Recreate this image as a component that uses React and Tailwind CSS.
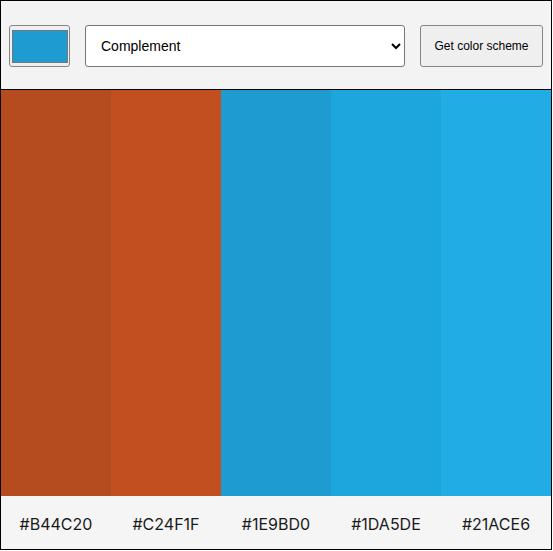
import { useState } from 'react';

const COLORS = ['#B44C20', '#C24F1F', '#1E9BD0', '#1DA5DE', '#21ACE6'];

const MODES = ['Monochrome', 'Monochrome-dark', 'Monochrome-light', 'Analogic', 'Complement', 'Analogic-complement', 'Triad', 'Quad'];

export default function App() {
  const [seed, setSeed] = useState('#1e9bd0');
  const [mode, setMode] = useState('Complement');

  return (
    <div className="w-[552px] h-[550px] border border-black flex flex-col font-['Liberation_Sans',Arial,sans-serif]">
      <header className="h-[89px] shrink-0 bg-[#f3f3f3] border-b border-black flex items-center pt-[2px] pl-2 pr-2">
        <label className="w-[61px] h-[42px] rounded-[3px] border border-[#858585] bg-[#efefef] flex items-center justify-center">
          <span className="w-[56px] h-[33px] border border-[#777] bg-[#1e9bd0]" style={{ backgroundColor: seed }} />
          <input type="color" className="hidden" value={seed} onChange={(e) => setSeed(e.target.value)} />
        </label>
        <select
          className="flex-1 ml-[15px] h-[42px] rounded-[3px] border border-[#767676] bg-white pl-[11px] pr-[10px] text-[14px] text-black"
          value={mode}
          onChange={(e) => setMode(e.target.value)}
        >
          {MODES.map((m) => <option key={m} value={m}>{m}</option>)}
        </select>
        <button type="button" className="ml-[15px] w-[123px] h-[42px] rounded-[3px] border border-[#858585] bg-[#efefef] text-[12px] text-black">
          Get color scheme
        </button>
      </header>

      <div className="flex-1 grid grid-cols-5">
        {COLORS.map((c) => (
          <div key={c} style={{ backgroundColor: c }} />
        ))}
      </div>

      <footer className="h-[53px] shrink-0 bg-[#f5f5f5] grid grid-cols-5 items-center font-['Inter',sans-serif] text-[16px] text-[#1a1a1a]">
        {COLORS.map((c) => (
          <span key={c} className="text-center pt-[3px]">{c}</span>
        ))}
      </footer>
    </div>
  );
}
